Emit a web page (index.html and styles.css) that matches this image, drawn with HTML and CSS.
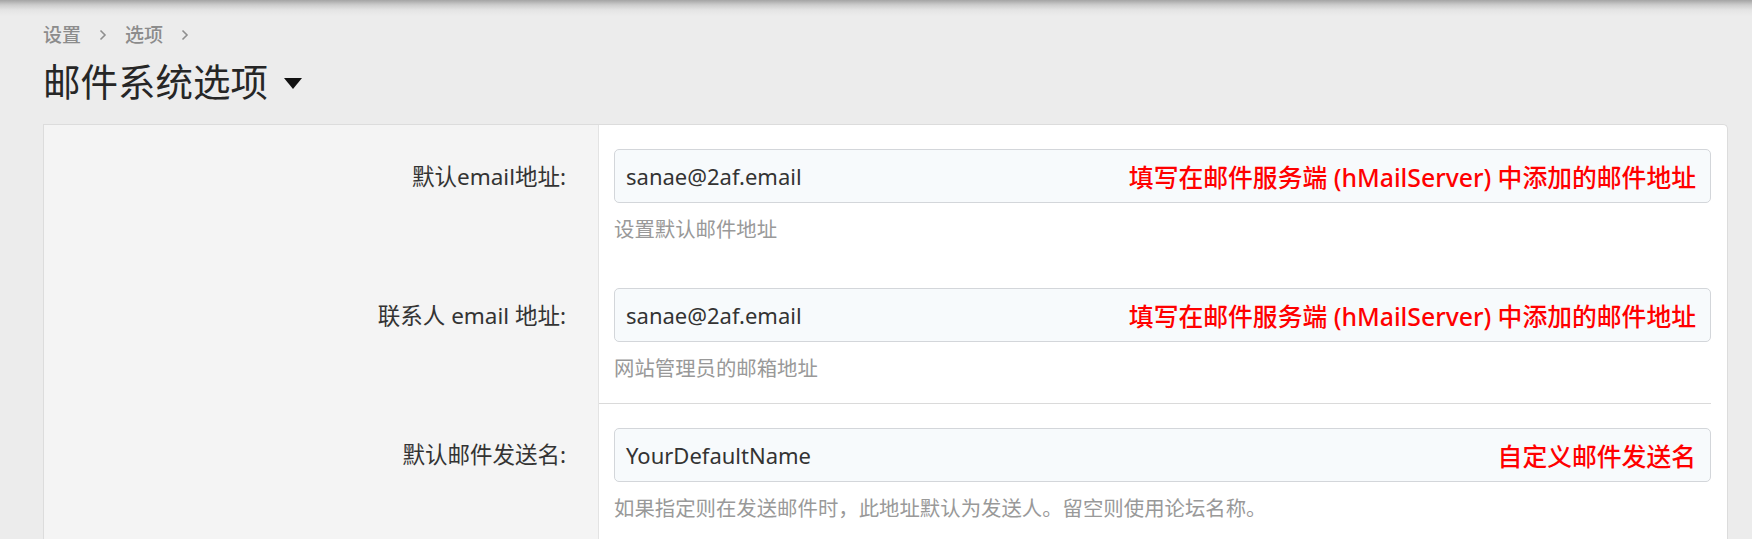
FILE: index.html
```html
<!DOCTYPE html>
<html lang="zh-CN">
<head>
<meta charset="utf-8">
<title>邮件系统选项</title>
<link rel="stylesheet" href="styles.css">
</head>
<body>
<div class="topshade"></div>
<main class="page">
  <nav class="crumbs">
    <span class="crumb">设置</span>
    <svg class="chev" width="8" height="12" viewBox="0 0 8 12"><polyline points="1.5,1.5 6,6 1.5,10.5" fill="none" stroke="#8f8f8f" stroke-width="1.6"/></svg>
    <span class="crumb">选项</span>
    <svg class="chev" width="8" height="12" viewBox="0 0 8 12"><polyline points="1.5,1.5 6,6 1.5,10.5" fill="none" stroke="#8f8f8f" stroke-width="1.6"/></svg>
  </nav>
  <h1 class="title">邮件系统选项<svg class="caret" width="18" height="11" viewBox="0 0 18 11"><polygon points="0,0 18,0 9,11" fill="#111"/></svg></h1>

  <section class="panel">
    <div class="label"><span>默认email地址:</span></div>
    <div class="field">
      <div class="inputwrap">
        <div class="input">sanae@2af.email</div>
        <span class="note">填写在邮件服务端 (hMailServer) 中添加的邮件地址</span>
      </div>
      <p class="help">设置默认邮件地址</p>
    </div>

    <div class="label"><span>联系人 email 地址:</span></div>
    <div class="field">
      <div class="inputwrap">
        <div class="input">sanae@2af.email</div>
        <span class="note">填写在邮件服务端 (hMailServer) 中添加的邮件地址</span>
      </div>
      <p class="help">网站管理员的邮箱地址</p>
    </div>

    <div class="label"><span>默认邮件发送名:</span></div>
    <div class="field sep">
      <div class="inputwrap">
        <div class="input">YourDefaultName</div>
        <span class="note">自定义邮件发送名</span>
      </div>
      <p class="help">如果指定则在发送邮件时，此地址默认为发送人。留空则使用论坛名称。</p>
    </div>
  </section>
</main>
</body>
</html>
```

FILE: styles.css
```css
html, body {
  margin: 0;
  padding: 0;
  height: 100%;
  overflow: hidden;
}
body {
  background: #ececec;
  font-family: "Noto Sans", "Noto Sans CJK SC", sans-serif;
  color: #333;
  position: relative;
}
.topshade {
  position: absolute;
  left: 0;
  right: 0;
  top: 0;
  height: 16px;
  background: linear-gradient(to bottom, #a4a4a4 0, #cdcdcd 5px, #e4e4e4 10px, #ececec 16px);
}
.page {
  position: relative;
  padding: 22px 24px 0 43px;
}
.crumbs {
  display: flex;
  align-items: center;
  gap: 18px;
  height: 26px;
  font-size: 19px;
  line-height: 26px;
  font-weight: 500;
  color: #8c8c8c;
}
.chev {
  display: block;
}
.title {
  margin: 12px 0 0;
  height: 44px;
  display: flex;
  align-items: center;
  font-size: 37.5px;
  line-height: 44px;
  font-weight: normal;
  color: #262626;
}
.caret {
  margin-left: 16px;
  margin-top: 2px;
}
.panel {
  margin-top: 20px;
  display: grid;
  grid-template-columns: 555px 1fr;
  background: #fff;
  border: 1px solid #dcdcdc;
  border-bottom: none;
  border-radius: 0 5px 0 0;
  height: 600px;
  align-content: start;
}
.label {
  background: #f4f4f4;
  border-right: 1px solid #e3e3e3;
  display: flex;
  justify-content: flex-end;
  padding: 37px 32px 0 0;
  font-size: 22.5px;
  line-height: 30px;
  color: #333;
}
.label:nth-last-of-type(2) {
  min-height: 600px;
}
.field {
  padding: 24px 0 22px 15px;
  margin-right: 16px;
}
.field.sep {
  border-top: 1px solid #dadada;
}
.inputwrap {
  position: relative;
}
.input {
  height: 54px;
  box-sizing: border-box;
  border: 1px solid #d3d6da;
  border-radius: 5px;
  background: #f7fafc;
  padding: 0 11px;
  display: flex;
  align-items: center;
  font-size: 22px;
  color: #333;
}
.note {
  position: absolute;
  right: 15px;
  top: 0;
  height: 54px;
  display: flex;
  align-items: center;
  font-size: 24.8px;
  font-weight: 500;
  color: #ff0000;
  white-space: nowrap;
}
.help {
  margin: 13px 0 0;
  font-size: 20.4px;
  line-height: 26px;
  color: #999;
}
```
